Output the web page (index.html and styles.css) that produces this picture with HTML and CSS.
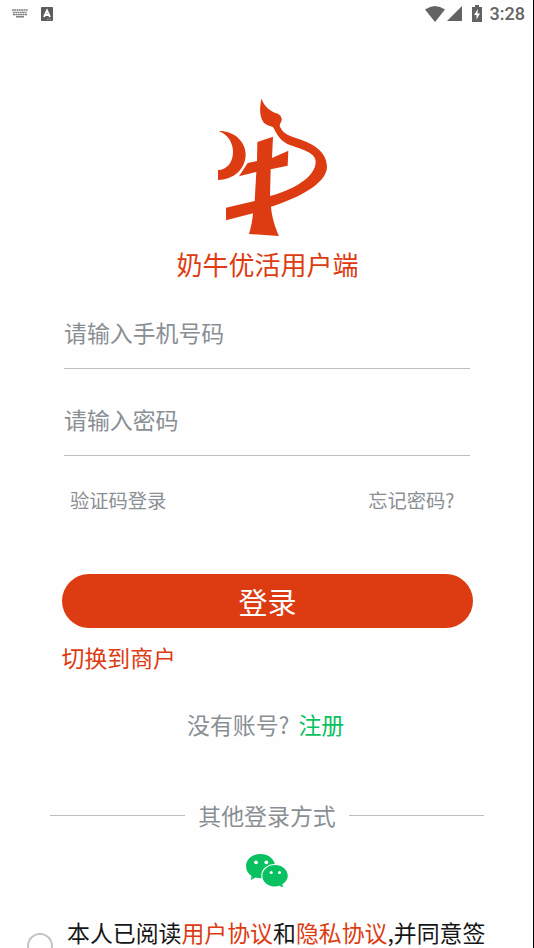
FILE: index.html
```html
<!DOCTYPE html>
<html lang="zh-CN">
<head>
<meta charset="utf-8">
<title>登录</title>
<link rel="stylesheet" href="styles.css">
</head>
<body>
<div class="screen">
  <header class="status">
    <svg class="keyboard" viewBox="0 0 16 9"><g fill="none" stroke="#777" stroke-width="1.4"><path d="M0 1h16M1 3.500h14" stroke-dasharray="1.8 .5"/><path d="M1 5.600h14" stroke-dasharray="2 .4"/><path d="M4 7.800h8"/></g></svg>
    <svg class="badge" viewBox="0 0 12 14"><rect width="12" height="14" rx="1" fill="#5c5c5c"/><path d="M3 10 6 3.500 9 10M4 8h4" fill="none" stroke="#fff" stroke-width="1.800"/><path d="M6 12.300h4" stroke="#ccc" stroke-width=".7" stroke-dasharray="1 .5"/></svg>
    <svg class="wifi" viewBox="0 0 20 16"><path d="M0 3.500Q10-3.500 20 3.500L10 16Z" fill="#636363"/></svg>
    <svg class="signal" viewBox="0 0 15 15"><path d="M15 0v15H0Z" fill="#636363"/></svg>
    <svg class="battery" viewBox="0 0 10 17"><path d="M3 0h4v2h3v15H0V2h3Z" fill="#636363"/><path d="M6 4 2 10h2.500v4.500L8 8.500H5.500Z" fill="#fff"/></svg>
    <span class="clock">3:28</span>
  </header>
  <main>
    <svg class="logo" viewBox="0 0 390 465" fill="#dd3b11">
      <path d="M35 123C75 121 116 150 116 194C115 238 80 268 33 270V240C61 239 78 216 78 185C78 158 63 134 35 123Z"/>
      <path d="M163 26C170 43 182 59 203 68C218 71 225 80 224 91C222 99 216 104 219 110C227 128 241 135 264 143C313 158 359 181 360 230C360 282 267 326 192 350C194 380 204 411 216 438L126 432C132 411 137 390 138 370L57 391V353L143 333L148 246L96 259L122 219L150 213L151 156L198 140L195 204L244 182L242 227L191 238L189 318C250 302 326 264 326 215C326 190 292 180 250 166C224 156 211 138 202 118C199 110 194 109 186 107C172 102 166 94 162 80C157 63 160 44 163 26Z"/>
    </svg>
    <h1>奶牛优活用户端</h1>
    <form>
      <div class="field">请输入手机号码</div>
      <div class="field">请输入密码</div>
      <div class="links"><span>验证码登录</span><span>忘记密码?</span></div>
      <button type="button">登录</button>
    </form>
    <div class="switch">切换到商户</div>
    <div class="register"><span>没有账号?</span><span class="green">注册</span></div>
    <div class="other">其他登录方式</div>
    <svg class="wechat" viewBox="0 0 44 36">
      <path d="M15.500 1C7 1 1 6.500 1 13.300c0 4 2 7.300 5.500 9.700L6 27l4.500-2.500c1.600.5 3.200.8 5 .8C24 25.300 30 20 30 13.300S24 1 15.500 1Z" fill="#09c160"/>
      <path d="M30 11.500c-7.500 0-13.200 4.900-13.200 11.300S22.500 34 30 34c1.600 0 3-.2 4.300-.6L38.500 35.500l-.5-4c3.300-2 5.300-5.100 5.300-8.700 0-6.400-5.800-11.300-13.300-11.300Z" fill="#09c160" stroke="#fff" stroke-width="1.100"/>
      <g fill="#fff"><circle cx="11" cy="9.300" r="1.900"/><circle cx="21.300" cy="9.300" r="1.900"/><circle cx="26.200" cy="19.500" r="1.500"/><circle cx="34.500" cy="19.500" r="1.500"/></g>
    </svg>
    <div class="agreement"><i class="radio"></i><p>本人已阅读<em>用户协议</em>和<em>隐私协议</em>,并同意签</p></div>
  </main>
</div>
</body>
</html>
```
FILE: styles.css
```css
* { box-sizing: border-box; }
body {
  margin: 0;
  overflow: hidden;
  background: #fefefe;
  font-family: "Noto Sans CJK SC", sans-serif;
  color: #8a8f94;
}
svg { display: block; flex: none; }
.screen {
  width: 534px;
  height: 948px;
  overflow: hidden;
  border-right: 1px solid #000;
}
.status {
  display: flex;
  align-items: center;
  height: 27px;
  padding: 0 8px 0 12px;
}
.keyboard { width: 16px; height: 9px; }
.badge { width: 12px; height: 14px; margin-left: 13px; }
.wifi { width: 20px; height: 16px; margin-left: auto; }
.signal { width: 15px; height: 15px; margin-left: 2px; }
.battery { width: 10px; height: 17px; margin: 0 8px 0 10px; }
.clock {
  font: 500 18px/27px Roboto, sans-serif;
  color: #636363;
}
main {
  display: flex;
  flex-direction: column;
  padding-top: 63px;
}
.logo { width: 130px; height: 155px; margin-left: 207px; }
h1 {
  margin: 1px 0 32px 176.5px;
  font-size: 26px;
  font-weight: 400;
  line-height: 36px;
  color: #dd3b11;
}
form { padding: 0 60px 0 62px; }
.field {
  height: 55px;
  margin: 0 3px 32px 2px;
  border-bottom: 1px solid #bdbdbd;
  font-size: 22.9px;
  line-height: 36px;
}
.links {
  display: flex;
  justify-content: space-between;
  margin: -3px 18.500px 59px 8px;
  font-size: 19.3px;
  line-height: 30px;
}
button {
  display: block;
  width: 411px;
  height: 54px;
  padding: 0;
  border: 0;
  border-radius: 27px;
  background: #dd3b11;
  color: #fff;
  font-family: inherit;
  font-size: 29px;
  line-height: 52px;
}
.switch, .register, .other, .agreement {
  font-size: 22.9px;
  line-height: 34px;
}
.switch { margin: 12px 0 0 61.5px; color: #dd3b11; }
.register { display: flex; gap: 9px; margin: 33px 0 0 187px; }
.green { color: #09c160; }
.other {
  display: flex;
  align-items: center;
  gap: 13px;
  margin: 57px 49px 0 50px;
  white-space: nowrap;
}
.other::before, .other::after {
  content: "";
  flex: 1;
  height: 1px;
  background: #bdbdbd;
}
.wechat { width: 44px; height: 36px; margin: 21px 0 0 245px; }
.agreement {
  display: flex;
  margin: 26px 0 0 27px;
  color: #161616;
}
.radio {
  flex: none;
  width: 26px;
  height: 26px;
  margin: 18px 14px 0 0;
  border: 2px solid #c4c4c4;
  border-radius: 50%;
}
.agreement p { margin: 0; white-space: nowrap; }
em { font-style: normal; color: #dd3b11; }
```
